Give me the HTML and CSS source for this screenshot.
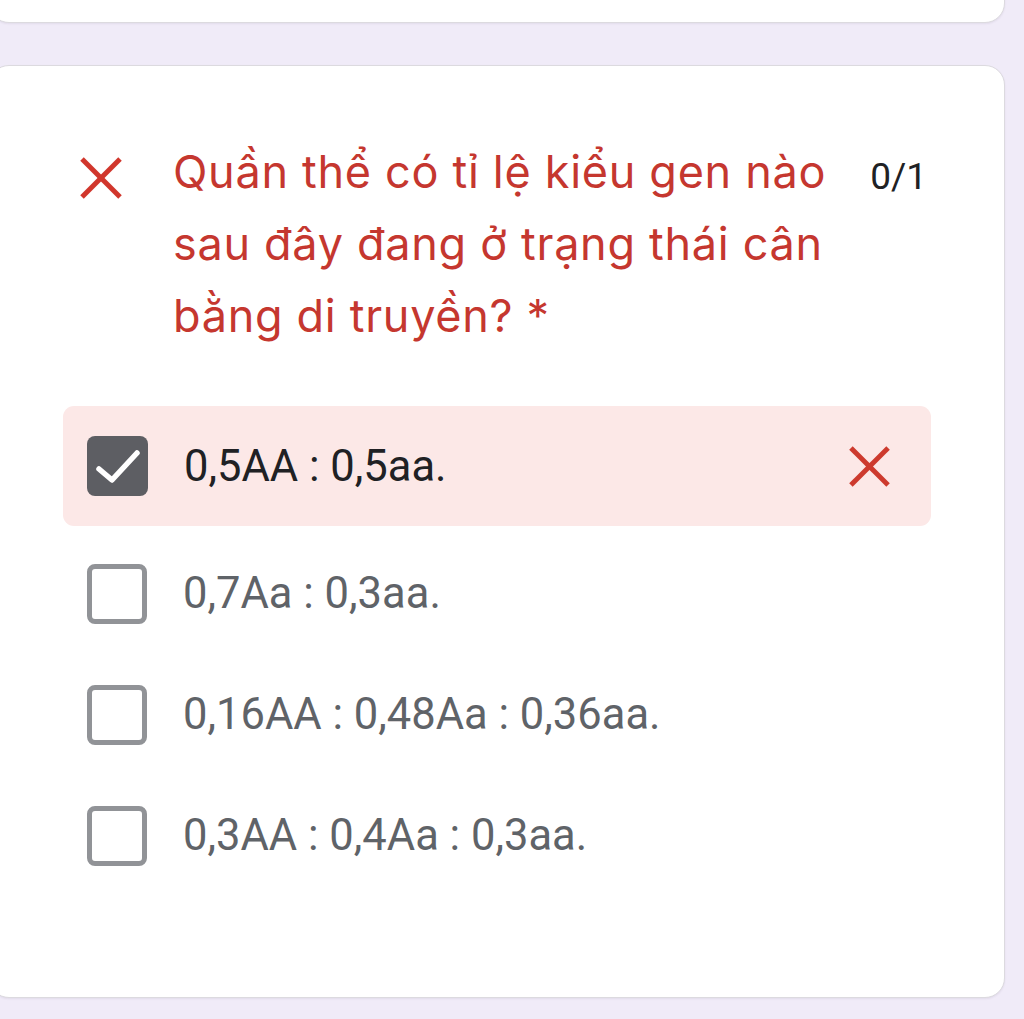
FILE: index.html
```html
<!DOCTYPE html>
<html lang="vi">
<head>
<meta charset="utf-8">
<title>Câu hỏi</title>
<link rel="stylesheet" href="styles.css">
</head>
<body>
<div class="page">
  <div class="card card-prev"></div>
  <div class="card card-q">
    <div class="q-head">
      <svg class="q-icon" viewBox="0 0 44 44" aria-hidden="true">
        <line x1="3" y1="3" x2="41" y2="41"/>
        <line x1="41" y1="3" x2="3" y2="41"/>
      </svg>
      <div class="q-title">Quần thể có tỉ lệ kiểu gen nào sau đây đang ở trạng thái cân bằng di truyền? *</div>
      <div class="q-score">0/1</div>
    </div>
    <div class="options">
      <div class="opt opt-wrong">
        <span class="box box-checked">
          <svg viewBox="0 0 60 60" aria-hidden="true"><polyline points="12,33 25,44 50,17"/></svg>
        </span>
        <span class="opt-text opt-text-sel">0,5AA : 0,5aa.</span>
        <svg class="opt-x" viewBox="0 0 44 44" aria-hidden="true">
          <line x1="3" y1="3" x2="41" y2="41"/>
          <line x1="41" y1="3" x2="3" y2="41"/>
        </svg>
      </div>
      <div class="opt">
        <span class="box"></span>
        <span class="opt-text">0,7Aa : 0,3aa.</span>
      </div>
      <div class="opt">
        <span class="box"></span>
        <span class="opt-text">0,16AA : 0,48Aa : 0,36aa.</span>
      </div>
      <div class="opt">
        <span class="box"></span>
        <span class="opt-text">0,3AA : 0,4Aa : 0,3aa.</span>
      </div>
    </div>
  </div>
</div>
</body>
</html>
```

FILE: styles.css
```css
* { box-sizing: border-box; }
html, body { margin: 0; padding: 0; }
body {
  background: #f0ebf8;
  font-family: Roboto, "Noto Sans", sans-serif;
  width: 1024px;
  height: 1019px;
  overflow: hidden;
}
.page {
  display: flex;
  flex-direction: column;
  gap: 42px;
  margin-left: -11px;
  width: 1016px;
}
.card {
  background: #ffffff;
  border: 1.5px solid #dcdadf;
  border-radius: 20px;
  box-shadow: 0 1px 2px rgba(60, 40, 80, 0.08);
}
.card-prev {
  height: 60px;
  margin-top: -37px;
}
.card-q {
  height: 933px;
  padding: 70px 73px 0 73px;
}
.q-head {
  display: flex;
  align-items: flex-start;
  padding: 0 4px 0 16px;
}
.q-icon {
  width: 44px;
  height: 44px;
  flex: none;
  margin-top: 20px;
  stroke: #d1362c;
  stroke-width: 5;
}
.q-title {
  flex: 1;
  margin-left: 50px;
  font-family: Inter, Roboto, sans-serif;
  font-size: 45px;
  letter-spacing: 0.7px;
  line-height: 72px;
  color: #c5372f;
}
.q-score {
  flex: none;
  margin-left: 24px;
  margin-top: 21px;
  font-size: 37px;
  line-height: 40px;
  color: #202124;
}
.options {
  margin-top: 54px;
  display: flex;
  flex-direction: column;
}
.opt {
  display: flex;
  align-items: center;
  height: 121px;
  padding: 0 40px 0 24px;
}
.opt-wrong {
  height: 120px;
  margin-bottom: 7px;
  background: #fce8e7;
  border-radius: 11px;
}
.box {
  width: 60px;
  height: 60px;
  flex: none;
  border: 5px solid #919397;
  border-radius: 8px;
}
.box-checked {
  width: 61px;
  background: #5d5e63;
  border: none;
  display: flex;
}
.box-checked svg {
  width: 60px;
  height: 60px;
  fill: none;
  stroke: #ffffff;
  stroke-width: 5.5;
  stroke-linecap: round;
  stroke-linejoin: round;
}
.opt-text {
  flex: 1;
  margin-left: 36px;
  font-size: 43.5px;
  color: #5f6368;
}
.opt-text-sel {
  color: #202124;
}
.opt-x {
  width: 43px;
  height: 43px;
  flex: none;
  stroke: #cd3a2e;
  stroke-width: 5;
}
```
